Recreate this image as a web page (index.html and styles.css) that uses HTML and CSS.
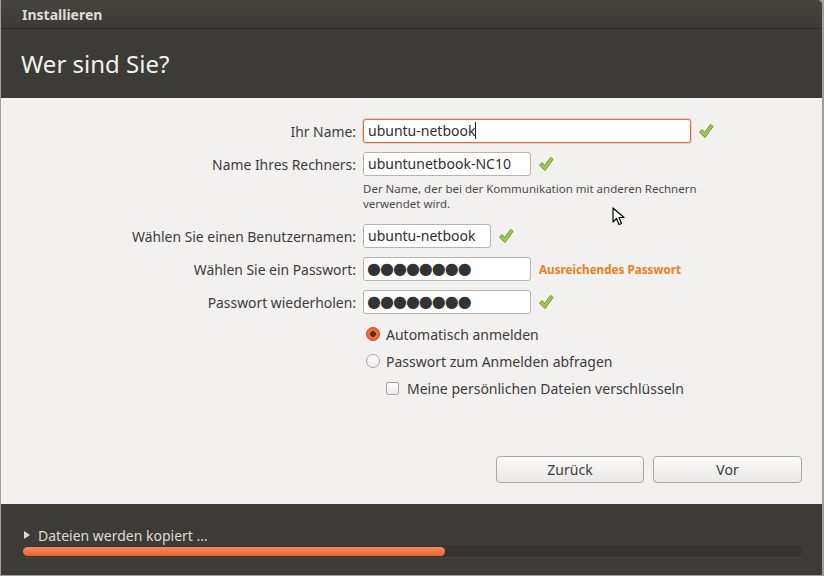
FILE: index.html
```html
<!DOCTYPE html>
<html lang="de">
<head>
  <meta charset="UTF-8">
  <title>Installieren</title>
<link rel="stylesheet" href="styles.css">
</head>
<body>
  <div class="window">
    <div class="titlebar">Installieren</div>
    <div class="header">Wer sind Sie?</div>

    <div class="content">
      <div class="form">
        <div class="row">
          <label class="label">Ihr Name:</label>
          <div class="input input-wide focused">ubuntu-netbook<span class="caret"></span></div>
          <svg class="tick" viewBox="0 0 16 16"><polygon points="1.5,9 4.2,6.6 6.6,9.6 12.6,1.4 15,3.4 7,14.6"/></svg>
        </div>

        <div class="row">
          <label class="label">Name Ihres Rechners:</label>
          <div class="input input-mid">ubuntunetbook-NC10</div>
          <svg class="tick" viewBox="0 0 16 16"><polygon points="1.5,9 4.2,6.6 6.6,9.6 12.6,1.4 15,3.4 7,14.6"/></svg>
        </div>
        <div class="help">Der Name, der bei der Kommunikation mit anderen Rechnern<br>verwendet wird.</div>

        <div class="row row-user">
          <label class="label">Wählen Sie einen Benutzernamen:</label>
          <div class="input input-small">ubuntu-netbook</div>
          <svg class="tick" viewBox="0 0 16 16"><polygon points="1.5,9 4.2,6.6 6.6,9.6 12.6,1.4 15,3.4 7,14.6"/></svg>
        </div>

        <div class="row">
          <label class="label">Wählen Sie ein Passwort:</label>
          <div class="input input-mid dots">●●●●●●●●</div>
          <span class="strength">Ausreichendes Passwort</span>
        </div>

        <div class="row">
          <label class="label">Passwort wiederholen:</label>
          <div class="input input-mid dots">●●●●●●●●</div>
          <svg class="tick" viewBox="0 0 16 16"><polygon points="1.5,9 4.2,6.6 6.6,9.6 12.6,1.4 15,3.4 7,14.6"/></svg>
        </div>

        <div class="option option-first">
          <span class="radio checked"></span>
          <span>Automatisch anmelden</span>
        </div>
        <div class="option">
          <span class="radio"></span>
          <span>Passwort zum Anmelden abfragen</span>
        </div>
        <div class="option option-sub">
          <span class="checkbox"></span>
          <span>Meine persönlichen Dateien verschlüsseln</span>
        </div>
      </div>

      <div class="buttons">
        <button class="btn btn-back">Zurück</button>
        <button class="btn">Vor</button>
      </div>

      <!-- mouse pointer in the shot -->
      <svg class="pointer" width="14" height="20" viewBox="0 0 14 20">
        <path d="M1 1 L1 15 L4.5 11.5 L7 17.5 L9.5 16.5 L7 10.5 L12 10.5 Z" fill="#fff" stroke="#000" stroke-width="1.2" stroke-linejoin="round"/>
      </svg>
    </div>

    <div class="footer">
      <div class="status"><span class="arrow"></span>Dateien werden kopiert …</div>
      <div class="progress"><div class="progress-fill" style="width: 422px"></div></div>
    </div>
  </div>
</body>
</html>
```

FILE: styles.css
```css
body {
  margin: 0;
  background-color: #a19e98;
  font-family: "Noto Sans", "Open Sans", sans-serif;
}

.window {
  width: 821px;
  height: 575px;
  margin-left: 1px;
  display: flex;
  flex-direction: column;
  background-color: #3c3b37;
  border-top-right-radius: 5px;
  overflow: hidden;
}

/* window title */
.titlebar {
  height: 28px;
  line-height: 29px;
  padding-left: 21px;
  font-size: 14px;
  font-weight: bold;
  color: #dfdbd2;
  background: linear-gradient(#45443f, #3c3b37);
  border-bottom: 1px solid #2e2d29;
}

.header {
  height: 69px;
  line-height: 70px;
  padding-left: 20px;
  font-size: 24px;
  color: #f2f1ed;
}

.content {
  position: relative;
  height: 406px;
  background-color: #f2f1f0;
  display: flex;
  flex-direction: column;
}

.form {
  padding-top: 21px;
  font-size: 13.9px;
  color: #3c3c3c;
}

.row {
  display: flex;
  align-items: center;
  height: 24px;
  margin-top: 9px;
}

.row:first-child {
  margin-top: 0;
}

.row-user {
  margin-top: 13px;
}

.label {
  width: 355px;
  text-align: right;
  margin-right: 7px;
}

.input {
  box-sizing: border-box;
  height: 24px;
  line-height: 22px;
  padding-left: 4px;
  font-size: 14px;
  color: #2e2e2e;
  background-color: #fff;
  border: 1px solid #b7b4af;
  border-radius: 3px;
}

.input-wide {
  width: 328px;
}

.input-mid {
  width: 168px;
}

.input-small {
  width: 128px;
}

.focused {
  border-color: #e06b3c;
  box-shadow: 0 0 0 1px rgba(224, 107, 60, 0.25);
}

.caret {
  display: inline-block;
  width: 1px;
  height: 17px;
  background-color: #222;
  vertical-align: -3px;
}

.dots {
  padding-left: 3px;
  font-size: 16px;
  letter-spacing: -1px;
  color: #333;
  font-family: "DejaVu Sans", sans-serif;
}

.tick {
  width: 16px;
  height: 16px;
  margin-left: 7px;
  fill: #98cc4a;
  stroke: #5f8f22;
  stroke-width: 0.9;
  stroke-linejoin: round;
}

.strength {
  margin-left: 8px;
  font-size: 11.7px;
  font-weight: bold;
  color: #f07d16;
}

.help {
  margin: 5px 0 0 362px;
  font-size: 11.5px;
  line-height: 15px;
  color: #4c4c4c;
}

.option {
  display: flex;
  align-items: center;
  gap: 6px;
  height: 20px;
  margin: 7px 0 0 365px;
  font-size: 14px;
}

.option-first {
  margin-top: 10px;
}

.option-sub {
  margin-left: 385px;
  gap: 8px;
}

.radio {
  box-sizing: border-box;
  width: 14px;
  height: 14px;
  border: 1px solid #a9a6a1;
  border-radius: 50%;
  background: linear-gradient(#ffffff, #ecebea);
}

.radio.checked {
  border-color: #b64a22;
  background: radial-gradient(circle, #5e2a17 0 2.6px, #ee7046 3.2px, #e35f33 100%);
}

.checkbox {
  box-sizing: border-box;
  width: 13px;
  height: 13px;
  border: 1px solid #a9a6a1;
  border-radius: 2px;
  background: linear-gradient(#ffffff, #ecebea);
}

.buttons {
  margin-top: auto;
  padding: 0 20px 21px 0;
  display: flex;
  justify-content: flex-end;
  gap: 9px;
}

.btn {
  width: 149px;
  height: 27px;
  font-family: inherit;
  font-size: 14px;
  color: #3c3c3c;
  background: linear-gradient(#fbfbfa, #e9e8e6);
  border: 1px solid #aaa7a2;
  border-radius: 4px;
}

.btn-back {
  width: 148px;
}

.pointer {
  position: absolute;
  left: 611px;
  top: 109px;
}

/* bottom progress area */
.footer {
  flex: 1;
  padding: 22px 20px 0 21px;
}

.status {
  display: flex;
  align-items: center;
  font-size: 14px;
  color: #dfdbd2;
  height: 18px;
}

.arrow {
  width: 0;
  height: 0;
  margin: 0 8px 0 2px;
  border-left: 6px solid #dfdbd2;
  border-top: 4px solid transparent;
  border-bottom: 4px solid transparent;
}

.progress {
  margin-top: 2px;
  height: 9px;
  background-color: #353430;
  border: 1px solid #33322e;
  border-radius: 5px;
  box-shadow: 0 1px 0 #45443f;
}

.progress-fill {
  height: 9px;
  background: linear-gradient(#f58a5c, #e9642e);
  border-radius: 5px;
}
```
